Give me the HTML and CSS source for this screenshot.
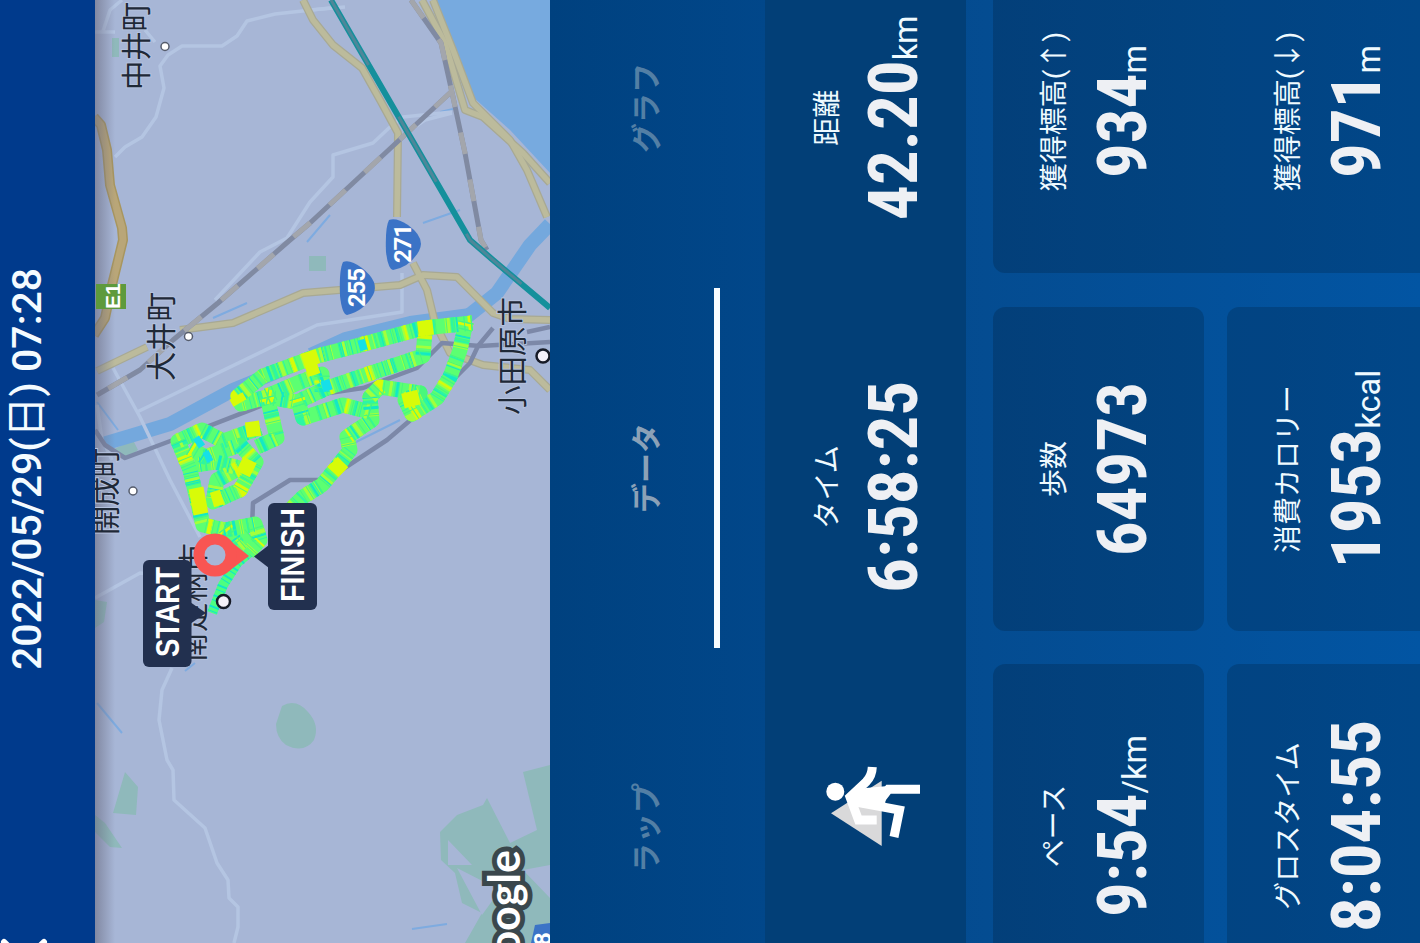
FILE: index.html
```html
<!DOCTYPE html>
<html lang="ja">
  <head>
    <meta charset="UTF-8" />
    <title>2022/05/29(日) 07:28</title>
    <link rel="stylesheet" href="styles.css">
  </head>
  <body>
    <div class="screen">
      <header class="header">
        <svg class="close" width="12" height="50" viewBox="0 0 12 50">
          <path d="M-18 24 L1 4 M-18 24 L1 44" />
        </svg>
        <h1 class="date">2022/05/29(<span>日</span>) 07:28</h1>
      </header>

      <svg class="map" width="943" height="455" viewBox="0 95 943 455">
        <defs>
          <linearGradient id="shade" x1="0" y1="0" x2="0" y2="1">
            <stop offset="0" stop-color="#686a80" stop-opacity="0.6" />
            <stop offset="1" stop-color="#686a80" stop-opacity="0" />
          </linearGradient>
          <g id="track">
            <path d="M472 323 L423 328 L360 345 L317 356 L263 376 L238 396 L241 404 L267 397" />
            <path d="M267 397 L297 402 L327 388 L377 371 L423 356 L425 332" />
            <path d="M267 396 L300 382 L322 374 L322 392" />
            <path d="M466 322 L460 350 L450 377 L437 398 L412 414 L405 400 L420 393 L380 387 L370 397 L372 420 L347 437 L350 450 L337 467 L322 485 L303 497 L280 520" />
            <path d="M297 398 L303 418 L343 405 L370 412" />
            <path d="M267 397 L277 438 L257 447" />
            <path d="M260 428 L223 441 L202 430 L178 441 L190 470 L203 525 L225 530 L255 524 L260 540 L248 553" />
            <path d="M190 448 L205 457 L240 445 L256 462 L240 490 L213 502 L217 480 L240 468 L215 462 L195 465" />
            <path d="M225 528 L238 545 L250 535" />
          </g>
        </defs>
        <rect y="95" width="943" height="455" fill="#a7b6d6" />

        <!-- map geometry is stored east-up, so turn it -->
        <g transform="matrix(0 1 -1 0 943 0)">
          <path class="water" d="M432 0 L448 30 L473 97 L510 130 L550 173 L550 0 Z" />
          <g class="park">
            <path d="M112 38 H119 V57 H112 Z M309 256 H326 V271 H309 Z M95 600 L107 602 L104 622 L95 628 Z" />
            <path d="M125 772 L138 787 L136 815 L113 813 Z M95 815 L105 823 L122 848 L110 847 L95 832 Z" />
            <path d="M282 706 Q296 698 308 712 Q320 725 314 740 Q304 754 286 745 Q276 738 276 724 Z" />
            <path d="M487 798 L483 805 L457 815 L440 832 L441 860 L455 873 L462 903 L482 913 L465 943 H550 V765 L523 772 L537 830 L510 843 Z" />
            <path d="M112 450 L133 440 L138 450 L125 460 Z" />
          </g>
          <path class="land" d="M448 840 L472 865 L448 865 Z M457 868 L500 890 L482 915 Z M523 870 L550 865 V898 Z" />
          <g class="stream">
            <path d="M97 402 L118 430 M97 703 L122 733 M185 671 L195 663 M213 318 L247 303 M307 242 L330 215 M423 223 L460 210 M412 929 L447 924 M440 112 L453 109 M350 445 L400 420" />
          </g>
          <path class="river" d="M103 444 L130 436 L170 424 L233 390 L330 350" />
          <path class="river thin" d="M310 353 L345 337 L410 321 L470 313" />
          <path class="river" d="M468 316 L497 293 L530 245 L550 224" />
          <g class="road">
            <path d="M330 8 L275 14 L247 21 L237 36 L222 46 L182 46 L168 55 L160 66 L164 88 L156 117 L142 137 L125 147 L115 157" />
            <path d="M95 32 H115 M103 31 L110 10 L122 0 M155 42 L145 30" />
            <path d="M452 112 L403 117 L390 127 L373 143 L333 155 L333 177 L310 202 L287 238 L260 252 L215 300" />
            <path d="M403 135 L425 120 L452 113" />
            <path d="M113 368 L140 417 L170 480 L200 537 M137 412 L317 325 L337 322 L402 312 V273" />
            <path d="M95 598 L140 573 L150 574" />
            <path d="M172 668 L162 690 L159 720 L167 760 L173 770 L174 800 L205 828 L217 863 L228 880 L229 898 L238 907 L238 927 L234 943" />
            <path d="M97 405 L102 440 L112 460 M310 10 L345 7" />
          </g>
          <g class="highway">
            <path d="M303 0 L313 20 L333 45 L362 68 L380 100 L398 133 L397 217" />
            <path d="M422 0 L445 43 L465 110 L483 117 L523 153 L550 183" />
            <path d="M433 0 L453 50 L473 103 L510 140 L527 170 L547 217" />
            <path d="M180 330 L233 323 L303 293 L400 285 L423 275 L457 277 L493 313 L510 319 L550 320" />
            <path d="M147 347 L97 371 M413 263 L427 290 L435 323 L450 353 L483 365 L530 370 L550 390" />
          </g>
          <g class="highway-fill">
            <path d="M303 0 L313 20 L333 45 L362 68 L380 100 L398 133 L397 217" />
            <path d="M422 0 L445 43 L465 110 L483 117 L523 153 L550 183" />
            <path d="M433 0 L453 50 L473 103 L510 140 L527 170 L547 217" />
            <path d="M180 330 L233 323 L303 293 L400 285 L423 275 L457 277 L493 313 L510 319 L550 320" />
            <path d="M147 347 L97 371 M413 263 L427 290 L435 323 L450 353 L483 365 L530 370 L550 390" />
          </g>
          <path class="expressway" d="M94 117 L101 125 L107 150 L110 185 L122 228 L123 240 L112 285 L105 318 L94 335" />
          <path class="expressway-fill" d="M94 117 L101 125 L107 150 L110 185 L122 228 L123 240 L112 285 L105 318 L94 335" />
          <g class="rail">
            <path d="M95 430 L105 445 L125 458 L173 440 L263 405 M315 395 L363 388 L417 368 L442 343 L480 346 L550 342" />
            <path d="M493 328 L478 346 L470 363 L430 403 L407 423 L387 440 L337 473 M330 480 H290 L253 503 L252 527 M527 332 L550 327" />
          </g>
          <g class="jr">
            <path d="M411 0 L441 43 L453 97 L465 153 L481 240 L487 250" />
            <path d="M451 92 L310 223 L290 240 L218 303 L173 340 L140 370 L97 395" />
          </g>
          <g class="jr-dash">
            <path d="M411 0 L441 43 L453 97 L465 153 L481 240 L487 250" />
            <path d="M451 92 L310 223 L290 240 L218 303 L173 340 L140 370 L97 395" />
          </g>
          <path class="shinkansen" d="M331 0 L470 240 L493 260 L550 308" />
          <path class="shinkansen-dash" d="M331 0 L470 240 L493 260 L550 308" />
        </g>

        <rect y="95" width="943" height="20" fill="url(#shade)" />

        <g class="place">
          <text x="853" y="147" textLength="88">中井町</text>
          <text x="562" y="172" textLength="89">大井町</text>
          <text x="408" y="116" textLength="87">開成町</text>
          <text x="281" y="204" textLength="119">南足柄市</text>
          <text x="528" y="523" textLength="118">小田原市</text>
        </g>

        <g transform="matrix(0 1 -1 0 943 0)">
          <path class="shield" d="M343 262 Q350 259 362 268 Q380 282 373 295 Q364 311 347 315 Q342 314 340 296 Q339 270 343 262 Z" />
          <path class="shield" d="M389 220 Q396 217 408 225 Q426 238 419 251 Q410 267 393 270 Q388 269 386 252 Q385 228 389 220 Z" />
          <path class="shield" d="M535 925 L550 923 V943 H531 Z" />
          <rect x="96" y="284" width="30" height="25" fill="#5e9a3c" />
        </g>
        <g class="route-no">
          <text x="636" y="365" textLength="39">255</text>
          <text x="680" y="411" textLength="39">271</text>
          <text class="exp-no" x="634" y="120">E1</text>
          <text x="-3" y="551">8</text>
        </g>

        <g transform="matrix(0 1 -1 0 943 0)">
          <path class="link" d="M250 552 L237 563 L223 585 L212 613" />
          <path class="link mix" d="M250 552 L237 563 L223 585 L212 613" />
          <use href="#track" class="track" />
          <use href="#track" class="track mint" />
          <use href="#track" class="track lime" />
          <use href="#track" class="track yellow" />
          <use href="#track" class="track aqua" />
          <use href="#track" class="track green" />
          <!-- slow stretches -->
          <path class="track slow" d="M418 329 L433 327 M303 361 L318 356 M306 370 L318 366 M403 401 L419 397 M343 462 L333 472 M196 488 L201 514 M212 500 L222 497 M250 460 L243 474 M246 430 L260 428 M236 396 L240 403" />
          <path class="track fast" d="M359 346 L366 344 M196 444 L202 440 M205 458 L211 455 M322 387 L331 384" />
          <g class="town">
            <circle cx="165" cy="46.5" r="4" />
            <circle cx="188.500" cy="336.500" r="4" />
            <circle cx="133" cy="491" r="4" />
          </g>
          <g class="city">
            <circle cx="223.500" cy="601.500" r="6.500" />
            <circle cx="543" cy="356" r="6.500" />
          </g>
        </g>

        <g transform="matrix(0 1 -1 0 943 0)">
          <path class="pin" d="M229 540 L249 556 L229 571 Z" />
          <circle cx="215" cy="555" r="16" class="ring" />
          <rect class="flag" x="143" y="560" width="48.500" height="107" rx="6" />
          <path class="flag" d="M190 602 L206 613 L190 624 Z" />
          <rect class="flag" x="268" y="503" width="49" height="107" rx="6" />
          <path class="flag" d="M269 545 L254 556.500 L269 568 Z" />
        </g>
        <g class="flag-text">
          <text x="286" y="179" textLength="90" lengthAdjust="spacingAndGlyphs">START</text>
          <text x="341" y="304" textLength="94" lengthAdjust="spacingAndGlyphs">FINISH</text>
        </g>
        <text class="logo" x="93" y="520" text-anchor="end">Google</text>
      </svg>

      <main class="panel">
        <nav class="tabs">
          <div class="tab">ラップ</div>
          <div class="tab active">データ</div>
          <div class="tab">グラフ</div>
        </nav>

        <section class="summary">
          <div class="sport">
            <svg width="92" height="106" viewBox="90 820 92 106">
              <g transform="matrix(0 1 -1 0 943 0)">
                <path d="M831 813.300 L881.700 780.700 V846 Z" fill="#d9d9da" />
                <circle cx="835.300" cy="791.700" r="9" fill="#fff" />
                <path d="M847 798 L852 792 L866 788 L888 786 L884 810 L853 806 Z" fill="#fff" />
                <path class="limb" d="M872.300 767 Q872 776 866 782 L850 797 L858.500 820 H876.700" />
                <path class="limb" d="M920 789.300 H888.500 L878 803" />
                <path class="limb" d="M856 802 L899.500 810 L894 837" />
              </g>
            </svg>
          </div>
          <div class="stat">
            <div class="label">タイム</div>
            <div class="value"><b>6:58:25</b></div>
          </div>
          <div class="stat">
            <div class="label">距離</div>
            <div class="value"><b>42.20</b><span>km</span></div>
          </div>
        </section>

        <section class="cards">
          <div class="card">
            <div class="label">ペース</div>
            <div class="value"><b>9:54</b><span>/km</span></div>
          </div>
          <div class="card">
            <div class="label">歩数</div>
            <div class="value"><b>64973</b></div>
          </div>
          <div class="card climb">
            <div class="label">獲得標高(↑)</div>
            <div class="value"><b>934</b><span>m</span></div>
            <div class="label second">獲得標高(↓)</div>
            <div class="value"><b>971</b><span>m</span></div>
          </div>
          <div class="card">
            <div class="label">グロスタイム</div>
            <div class="value"><b>8:04:55</b></div>
          </div>
          <div class="card">
            <div class="label">消費カロリー</div>
            <div class="value"><b>1953</b><span>kcal</span></div>
          </div>
        </section>
      </main>
    </div>
  </body>
</html>
```
FILE: styles.css
```css
html,
body {
  margin: 0;
  width: 1420px;
  height: 943px;
  overflow: hidden;
}

body {
  background: #003a8c;
  font-family: Roboto, "Noto Sans CJK JP", sans-serif;
}

/* portrait screen, turned a quarter to the left */
.screen {
  width: 943px;
  height: 1420px;
  overflow: hidden;
  display: flex;
  flex-direction: column;
  transform-origin: 0 0;
  transform: translateY(943px) rotate(-90deg);
}

.header {
  height: 95px;
  flex: none;
  display: flex;
  background: #003a8c;
  color: #f4fbff;
}

.close {
  flex: none;
}

.close path {
  fill: none;
  stroke: #fff;
  stroke-width: 6;
  stroke-linecap: round;
}

.date {
  margin: 0;
  padding-right: 7px;
  flex: 1;
  text-align: center;
  font-size: 41px;
  line-height: 54px;
  font-weight: 500;
}

.date span {
  font-weight: 400;
}

.map {
  display: block;
  flex: none;
}

.map path {
  stroke-linejoin: round;
}

.water {
  fill: #77aadf;
}

.park {
  fill: #8fb9bb;
}

.land {
  fill: #a7b6d6;
}

.stream,
.river,
.road,
.highway,
.highway-fill,
.expressway,
.expressway-fill,
.rail,
.jr,
.jr-dash,
.shinkansen,
.shinkansen-dash,
.link,
.track {
  fill: none;
}

.stream {
  stroke: #7eabe0;
  stroke-width: 2;
}

.river {
  stroke: #74a8dd;
  stroke-width: 14;
}

.thin {
  stroke-width: 10;
}

.road {
  stroke: #b4c5e2;
  stroke-width: 3.5;
}

.highway {
  stroke: #a8a994;
  stroke-width: 8;
}

.highway-fill {
  stroke: #bcbb9c;
  stroke-width: 5.5;
}

.expressway {
  stroke: #a8965f;
  stroke-width: 10;
}

.expressway-fill {
  stroke: #b9a678;
  stroke-width: 7;
}

.rail {
  stroke: #7c88a8;
  stroke-width: 4.500;
}

.jr {
  stroke: #808aa2;
  stroke-width: 5;
}

.jr-dash {
  stroke: #a3a6ac;
  stroke-width: 5;
  stroke-dasharray: 22 26;
}

.shinkansen {
  stroke: #14909c;
  stroke-width: 6;
}

.shinkansen-dash {
  stroke: #4d8799;
  stroke-width: 3;
  stroke-dasharray: 75 60;
}

.place text {
  font-family: "Noto Sans CJK JP", sans-serif;
  font-size: 29.500px;
  fill: #1f2937;
  stroke: #b4c2de;
  stroke-width: 2;
  paint-order: stroke;
}

.shield {
  fill: #3b73c6;
}

.route-no text {
  font-size: 24px;
  font-weight: 700;
  fill: #fff;
}

.route-no .exp-no {
  font-family: "Liberation Sans", sans-serif;
  font-size: 21px;
}

.track {
  stroke: #5cff72;
  stroke-width: 15;
}

.mint {
  stroke: #2df5a4;
  stroke-dasharray: 2 5 1 9 4 3 1 12;
}

.lime {
  stroke: #a4ff3c;
  stroke-dasharray: 3 11 1 7 5 16;
}

.yellow {
  stroke: #d8fb08;
  stroke-dasharray: 4 62 2 37 6 71;
}

.aqua {
  stroke: #14e8c4;
  stroke-dasharray: 1 13 2 31 1 8 3 17;
}

.green {
  stroke: #49f77c;
  stroke-dasharray: 1 6 1 10;
}

.slow {
  stroke: #d8fb08;
}

.fast {
  stroke: #16e0e8;
  stroke-width: 11;
}

.link {
  stroke: #4dff80;
  stroke-width: 10;
}

.mix {
  stroke: #12e4cc;
  stroke-dasharray: 2 3 1 5;
}

.town {
  fill: #fff;
  stroke: #555c6c;
  stroke-width: 1.500;
}

.city {
  fill: #f4f0f8;
  stroke: #161a26;
  stroke-width: 2.500;
}

.pin {
  fill: #f95552;
}

.ring {
  fill: none;
  stroke: #f95552;
  stroke-width: 11;
}

.flag {
  fill: #22304f;
}

.flag-text text {
  font-family: "Liberation Sans", sans-serif;
  font-size: 33px;
  font-weight: 700;
  fill: #fff;
}

.logo {
  font-family: Lato, sans-serif;
  font-size: 43px;
  font-weight: 700;
  fill: #fff;
  stroke: #3a474c;
  stroke-width: 10;
  paint-order: stroke;
}

.panel {
  height: 870px;
  flex: none;
  background: linear-gradient(#00417f, #01478a 25%, #044c91 50%, #0255a3);
}

.tabs {
  display: flex;
  height: 170px;
  margin-left: -65px;
  width: 1080px;
}

.tab {
  width: 360px;
  height: 164px;
  text-align: center;
  font-family: "Noto Sans CJK JP", sans-serif;
  font-size: 30px;
  line-height: 189px;
  font-weight: 700;
  color: #537fa5;
}

.active {
  color: #8ba1b7;
  border-bottom: 6px solid #f7fcff;
}

.summary {
  display: flex;
  width: 1010px;
  height: 201px;
  margin-top: 45px;
  background: #023f77;
}

.sport {
  width: 272px;
  padding-top: 55px;
  text-align: center;
}

.limb {
  fill: none;
  stroke: #fff;
  stroke-width: 9;
}

.stat {
  width: 370px;
  padding-top: 43px;
}

.label {
  text-align: center;
  font-size: 28px;
  line-height: 40px;
  color: #effaff;
}

.value {
  display: flex;
  justify-content: center;
  align-items: baseline;
  height: 70px;
  margin-top: 11px;
  line-height: 70px;
  color: #eef0f4;
}

.value b {
  font-family: "Roboto Condensed", Roboto, sans-serif;
  font-size: 69px;
  font-stretch: 75%;
}

.value span {
  font-size: 32.500px;
  color: #effaff;
}

.cards {
  display: grid;
  grid-template-columns: 324px 324px 324px;
  grid-template-rows: 211px 211px;
  gap: 23px 33px;
  margin: 27px 0 0 -45px;
}

.card {
  box-sizing: border-box;
  padding-top: 42px;
  border-radius: 12px;
  background: rgba(0, 0, 0, 0.160);
}

.card .value {
  margin-top: 13px;
}

.climb {
  grid-row: span 2;
  margin-left: 1px;
}

.climb .second {
  margin-top: 111px;
}
```
